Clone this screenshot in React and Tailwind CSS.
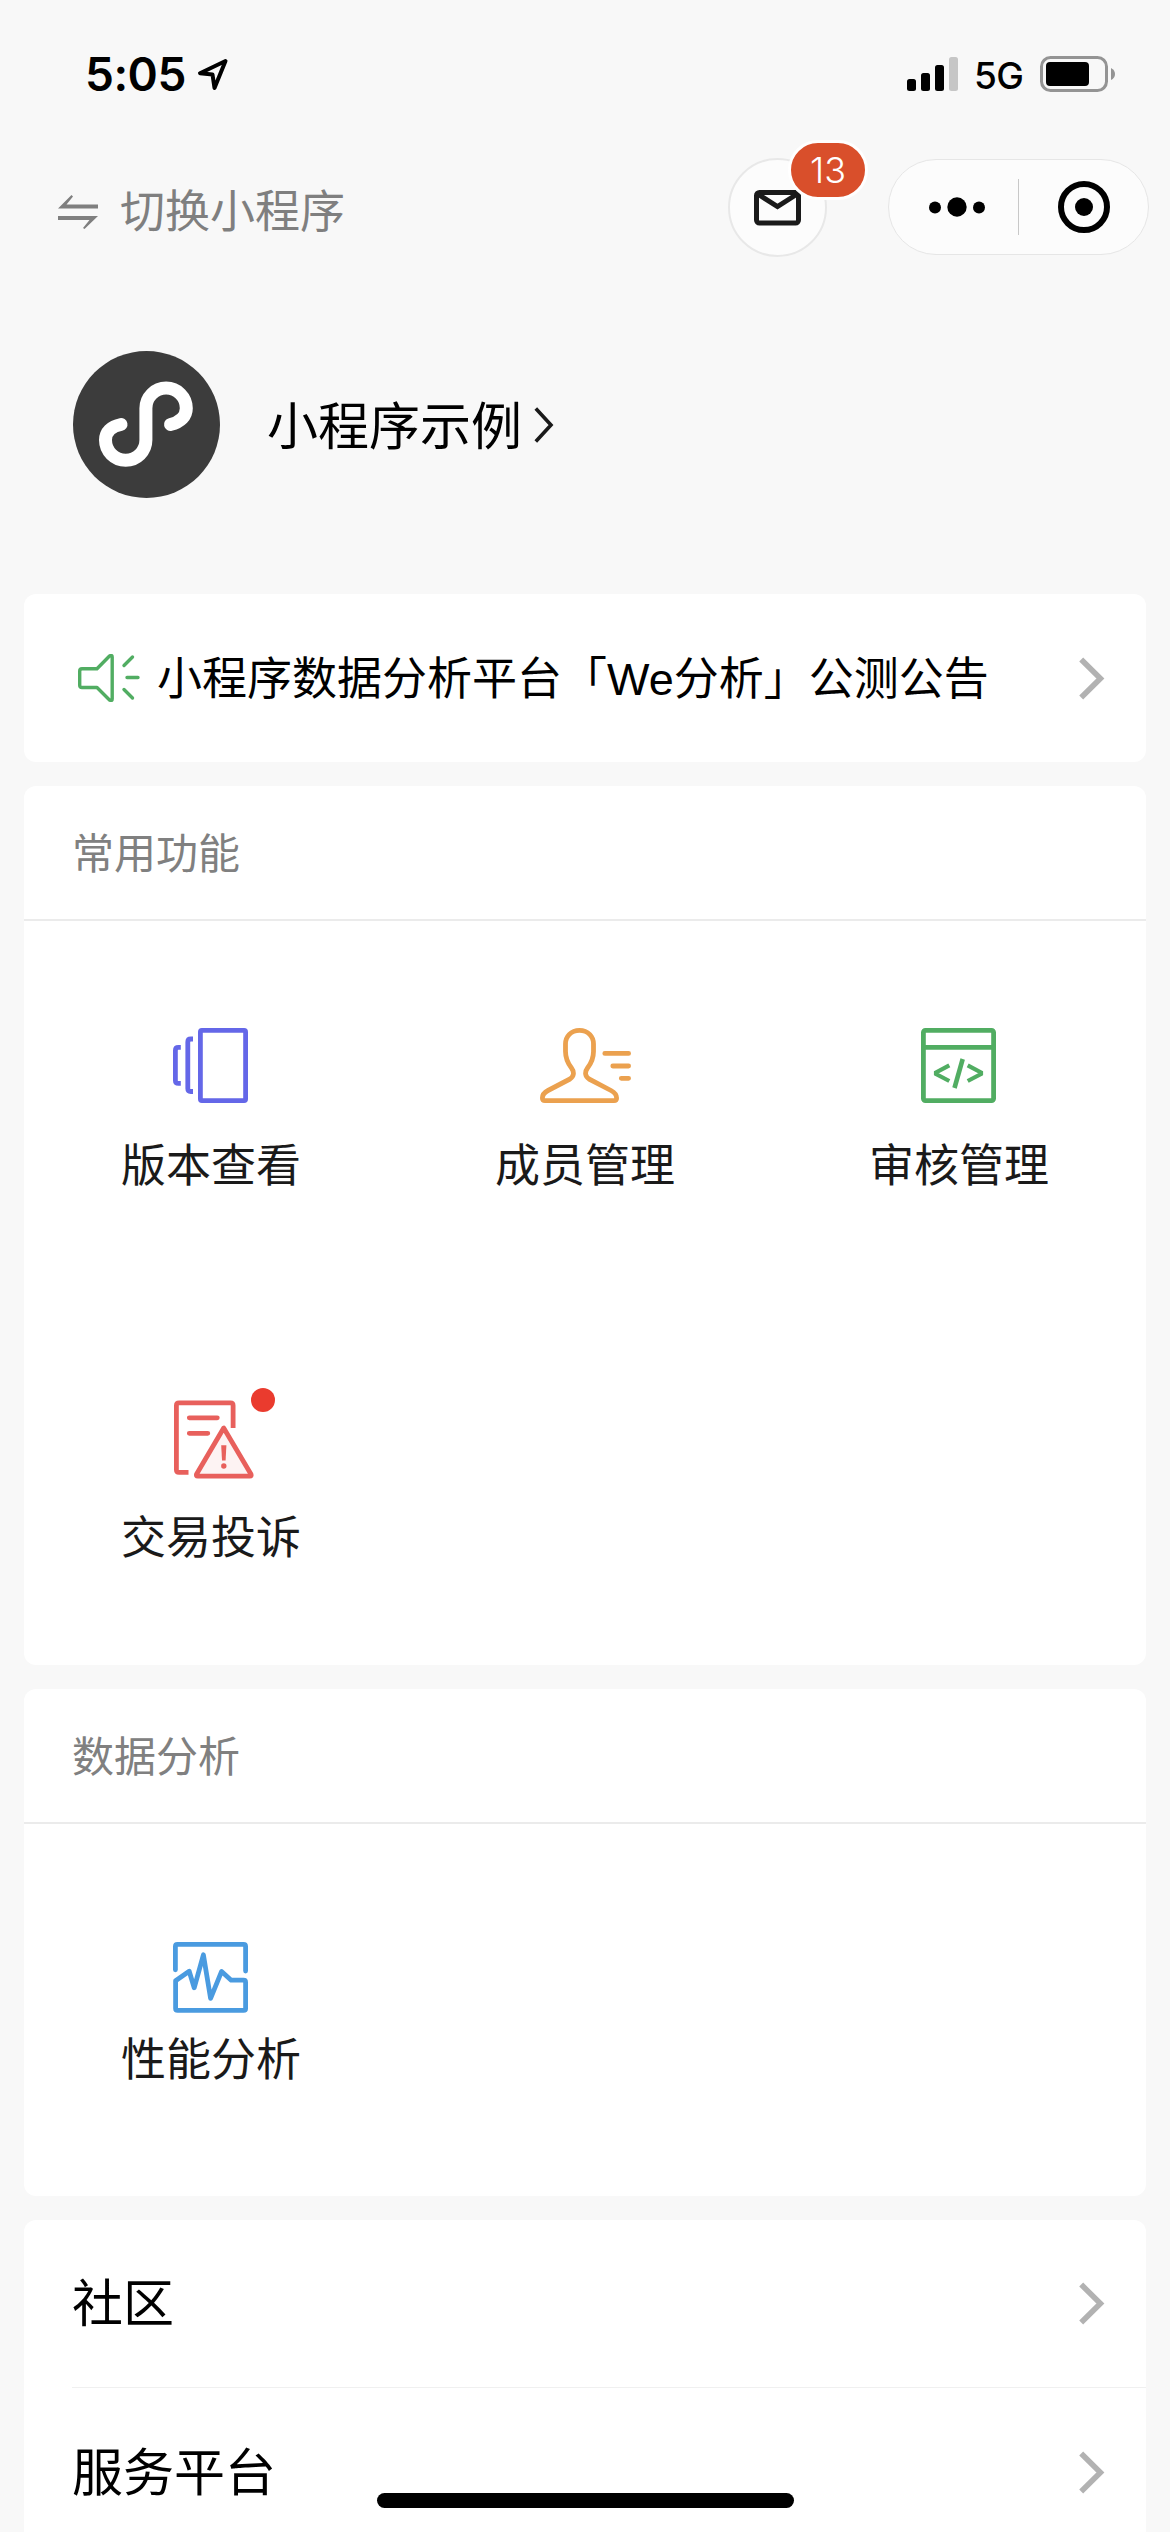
import React from "react";

const VersionIcon = () => (
  <svg className="w-[76px] h-[75px]" viewBox="0 0 76 75" fill="none" stroke="#6467e8" strokeWidth="4.800">
    <rect x="27.400" y="2.400" width="45.200" height="70.200" rx="1.500" />
    <path d="M20 11h-2.200q-3 0-3 3v46.500q0 3 3 3H20" />
    <path d="M7.800 19.400H5.400q-3 0-3 3v30q0 3 3 3h2.400" />
  </svg>
);

const MemberIcon = () => (
  <svg
    className="w-[91px] h-[75px]"
    viewBox="0 0 91 75"
    fill="none"
    stroke="#eba14f"
    strokeWidth="4.800"
    strokeLinecap="round"
    strokeLinejoin="round"
  >
    <path d="M39.500 2.400C31 2.400 25.500 8.500 25.500 16v7.500c0 6.500 2.500 12 6 16.500 3 4 2.500 8.500-1.500 11L8 62.500Q2.400 65.500 2.400 70q0 2.600 2.600 2.600h69q2.600 0 2.600-2.600 0-4.500-5.600-7.500L49 51c-4-2.500-4.500-7-1.500-11 3.500-4.500 6-10 6-16.500V16C53.500 8.500 48 2.400 39.500 2.400z" />
    <path d="M64.800 25.400h23.800M72.800 38h15.800M81.300 50.300h7.300" />
  </svg>
);

const AuditIcon = () => (
  <svg className="w-[76px] h-[75px]" viewBox="0 0 76 75" fill="none" stroke="#51ad62" strokeWidth="4.800">
    <rect x="2.400" y="2.400" width="70.200" height="70.200" rx="2" />
    <path d="M3 19.300h69" />
    <path d="M28.300 37.300L15 44.500v1.500l13.300 7M46.700 37.300L60 44.500v1.500l-13.300 7" strokeWidth="4.200" />
    <path d="M41.700 31L33.500 60" strokeWidth="4.600" />
  </svg>
);

const ComplaintIcon = () => (
  <svg
    className="w-[76px] h-[75px] overflow-visible"
    viewBox="0 0 76 75"
    fill="none"
    stroke="#e8605c"
    strokeWidth="4.800"
    strokeLinejoin="round"
  >
    <path d="M15.500 72.400H6Q3.400 72.400 3.400 69.800V5.400q0-2.600 2.600-2.600h51.500q2.600 0 2.600 2.600V28" />
    <path d="M16.300 17.800h28M16.300 33.300h18.500" strokeLinecap="round" />
    <path d="M50.700 28L23.500 74.200q-.8 2 1.300 2h52q2 0 1.200-2z" fill="#fdf3f3" />
    <path d="M48.200 45.200h5.200l-.8 15.400h-3.600z" fill="#e8605c" stroke="none" />
    <circle cx="50.800" cy="66" r="2.700" fill="#e8605c" stroke="none" />
  </svg>
);

const PerformanceIcon = () => (
  <svg
    className="w-[76px] h-[71px]"
    viewBox="0 0 76 71"
    fill="none"
    stroke="#4a9be0"
    strokeWidth="4.800"
    strokeLinecap="round"
    strokeLinejoin="round"
  >
    <path d="M2.400 27.800V4.400q0-2 2-2h66.200q2 0 2 2V29" />
    <path d="M2.600 38.800l13.600-9.600 5 16.600 9.200-33 7.200 43.600 11-27 9.600 8.800h12.400q2 0 2 2v26.200q0 2-2 2H4.600q-2 0-2-2z" />
  </svg>
);

const Chevron = () => (
  <svg className="w-[26px] h-[43px]" viewBox="0 0 26 43" fill="none" stroke="#b2b2b2" strokeWidth="5.600">
    <path d="M2.200 2.600L21.400 21.500 2.200 40.400" />
  </svg>
);

const commonItems = [
  { name: "版本查看", icon: <VersionIcon /> },
  { name: "成员管理", icon: <MemberIcon /> },
  { name: "审核管理", icon: <AuditIcon /> },
  { name: "交易投诉", icon: <ComplaintIcon />, dot: true },
];

const links = ["社区", "服务平台"];

const SectionTitle = ({ children }) => (
  <div className="h-[135px] pl-12 pt-1 flex items-center border-b-2 border-[#ebebeb] text-[42px] text-[#808080]">
    {children}
  </div>
);

const StatusBar = () => (
  <div className="h-[132px] pt-[16px] pl-[85px] pr-[55px] flex items-center justify-between">
    <div className="flex items-center gap-[11px]">
      <span className="font-[Inter] font-semibold text-[46px] leading-[60px] tracking-[-0.5px]">5:05</span>
      <svg className="w-[32px] h-[33px]" viewBox="0 0 32 33" fill="none" stroke="#000" strokeWidth="4" strokeLinejoin="round">
        <path d="M28.500 3L3 15.200 15.500 16.500 17.500 30z" />
      </svg>
    </div>
    <div className="flex items-center">
      <svg className="w-[51px] h-[34px]" viewBox="0 0 51 34">
        <rect x="0" y="22" width="9" height="12" rx="2.500" />
        <rect x="14" y="16" width="9" height="18" rx="2.500" />
        <rect x="28" y="8" width="9" height="26" rx="2.500" />
        <rect x="42" y="0" width="9" height="34" rx="2.500" fill="#c6c6c6" />
      </svg>
      <span className="ml-[16px] w-[66px] pt-1 font-[Inter] font-medium text-[37px] leading-[50px] tracking-[-0.5px]">5G</span>
      <svg className="w-[75px] h-[36px]" viewBox="0 0 75 36">
        <rect x="1.500" y="1.500" width="65" height="33" rx="9" fill="none" stroke="#949494" strokeWidth="3" />
        <rect x="6" y="6" width="43" height="24" rx="4" />
        <path d="M71 12q4 2 4 6t-4 6z" fill="#949494" />
      </svg>
    </div>
  </div>
);

const NavBar = () => (
  <div className="h-[151px] pl-[58px] pr-[21px] flex items-center">
    <svg className="w-[40px] h-[34px] mt-2" viewBox="0 0 40 34" fill="#7f7f7f">
      <path d="M40 9.500v4H0L13.500 0l1.500 1.500-6.500 8zM0 21h40L26.500 34 25 33l6.500-8H0z" />
    </svg>
    <span className="ml-[22px] mt-[10px] text-[45px] leading-[60px] text-[#7f7f7f]">切换小程序</span>

    <div className="relative ml-auto w-[99px] h-[99px] rounded-full bg-[#fcfcfc] border-2 border-[#e8e8e8] flex items-center justify-center">
      <svg className="w-[47px] h-[36px]" viewBox="0 0 47 36" fill="none" stroke="#1a1a1a" strokeWidth="5">
        <rect x="2.500" y="2.500" width="42" height="30.500" rx="3" />
        <path d="M3 3.500l20.500 13L44 3.500" />
      </svg>
      <span className="absolute left-[58px] top-[-20px] w-[80px] h-[60px] rounded-full border-3 border-white bg-[#d94f2b] flex items-center justify-center font-[Inter] font-light text-[36px] text-white">
        13
      </span>
    </div>

    <div className="ml-[61px] mb-px w-[261px] h-[96px] rounded-full bg-[#fcfcfc] border border-[#e6e6e6] flex items-center">
      <svg className="ml-[40px] w-[56px] h-[20px]" viewBox="0 0 56 20">
        <circle cx="6" cy="10.500" r="6" />
        <circle cx="28" cy="10" r="9.700" />
        <circle cx="50" cy="10.500" r="6" />
      </svg>
      <div className="ml-[33px] w-px h-[56px] bg-[#c8c8c8]" />
      <svg className="ml-[39px] w-[52px] h-[52px]" viewBox="0 0 52 52">
        <circle cx="26" cy="26" r="23" fill="none" stroke="#000" strokeWidth="6" />
        <circle cx="26" cy="26" r="9" />
      </svg>
    </div>
  </div>
);

const App = () => {
  return (
    <div className="relative w-[1170px] h-[2532px] overflow-hidden bg-[#f8f8f8] text-black font-['Liberation_Sans','Noto_Sans_CJK_SC',sans-serif]">
      <StatusBar />
      <NavBar />

      {/* Current mini program */}
      <div className="h-[311px] pl-[73px] pt-[68px] flex items-start">
        <svg className="w-[147px] h-[147px]" viewBox="0 0 147 147">
          <circle cx="73.500" cy="73.500" r="73.500" fill="#3c3c3c" />
          <path
            d="M97.500 73.500C108 71 113.300 65 113.300 57.300A20.200 20.200 0 0 0 72.900 57.300V89A20.200 20.200 0 0 1 32.500 89C32.500 81 38 75.500 48 73.500"
            fill="none"
            stroke="#fff"
            strokeWidth="13"
            strokeLinecap="round"
          />
        </svg>
        <span className="ml-[47px] mt-[47px] text-[51px] leading-[60px]">小程序示例</span>
        <svg className="ml-[12px] mt-[56px] w-[20px] h-[36px]" viewBox="0 0 20 36" fill="none" stroke="#1a1a1a" strokeWidth="3.600">
          <path d="M1.800 1.500L17 18 1.800 34.500" />
        </svg>
      </div>

      <div className="px-6 flex flex-col gap-6">
        {/* Notice */}
        <div className="h-[168px] pl-[54px] pr-[41px] rounded-xl bg-white flex items-center">
          <svg
            className="w-[62px] h-[48px]"
            viewBox="0 0 62 48"
            fill="none"
            stroke="#51ad62"
            strokeWidth="3.400"
            strokeLinecap="round"
            strokeLinejoin="round"
          >
            <path d="M1.700 17q0-2.300 2.300-2.300h15L31.500 2q2.700-1.500 2.700 1v42q0 2.500-2.700 1L19 33.500H4q-2.300 0-2.300-2.300z" />
            <path d="M46 11.500l8.500-8.500M49 23.500h11M46 35.500l8.500 8.500" />
          </svg>
          <span className="ml-[17px] mt-[3px] text-[45px] leading-[60px]">小程序数据分析平台「We分析」公测公告</span>
          <div className="ml-auto">
            <Chevron />
          </div>
        </div>

        {/* Common functions */}
        <div className="rounded-xl bg-white">
          <SectionTitle>常用功能</SectionTitle>
          <div className="grid grid-cols-3">
            {commonItems.map((item) => (
              <div key={item.name} className="h-[372px] pt-[107px] flex flex-col items-center">
                <div className="relative">
                  {item.icon}
                  {item.dot && (
                    <span className="absolute left-[78px] top-[-12px] w-6 h-6 rounded-full bg-[#ea3b2e]" />
                  )}
                </div>
                <span className="mt-[34px] text-[45px] leading-[60px] text-[#1a1a1a]">{item.name}</span>
              </div>
            ))}
          </div>
        </div>

        {/* Data analysis */}
        <div className="rounded-xl bg-white">
          <SectionTitle>数据分析</SectionTitle>
          <div className="grid grid-cols-3">
            <div className="h-[372px] pt-[118px] flex flex-col items-center">
              <PerformanceIcon />
              <span className="mt-[18px] text-[45px] leading-[60px] text-[#1a1a1a]">性能分析</span>
            </div>
          </div>
        </div>

        {/* Links */}
        <div className="rounded-t-xl bg-white pl-12 divide-y divide-[#f0f0f0]">
          {links.map((link) => (
            <div key={link} className="h-[168px] pr-[41px] flex items-center justify-between">
              <span className="mt-[3px] text-[51px] leading-[60px]">{link}</span>
              <Chevron />
            </div>
          ))}
        </div>
      </div>

      {/* Home indicator */}
      <div className="absolute left-[377px] bottom-6 w-[417px] h-[15px] rounded-full bg-black" />
    </div>
  );
};

export default App;
